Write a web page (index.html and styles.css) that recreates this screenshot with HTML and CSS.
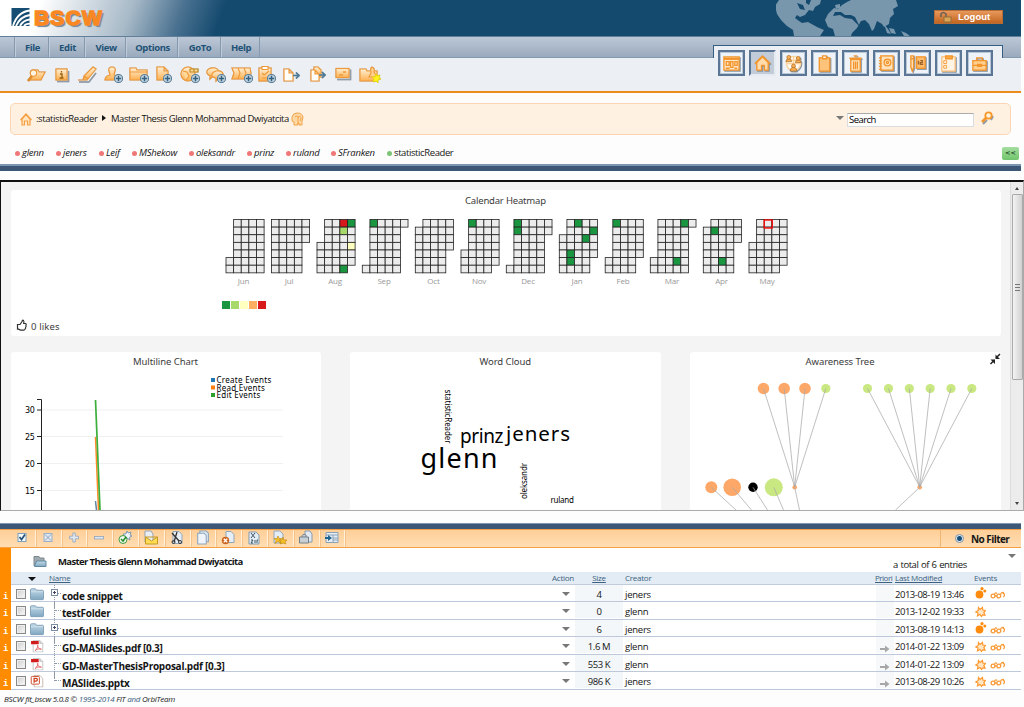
FILE: index.html
```html
<!DOCTYPE html>
<html lang="en">
<head>
<meta charset="utf-8">
<title>BSCW</title>
<link rel="stylesheet" href="styles.css">
</head>
<body>
<svg class="defs" width="0" height="0">
  <defs>
    <linearGradient id="og" x1="0" y1="0" x2="0" y2="1"><stop offset="0" stop-color="#fff0d6"/><stop offset="1" stop-color="#fdb050"/></linearGradient>
    <linearGradient id="bg" x1="0" y1="0" x2="0" y2="1"><stop offset="0" stop-color="#c4dbe9"/><stop offset="1" stop-color="#7fa6c0"/></linearGradient>
    <symbol id="plus" viewBox="0 0 8 8"><circle cx="4" cy="4" r="3.600" fill="#c5d5e0" stroke="#58809c" stroke-width=".9"/><path d="M4 1.600v4.800M1.600 4h4.800" stroke="#34607f" stroke-width="1.300"/></symbol>
    <symbol id="page" viewBox="0 0 14 14"><path d="M4.500 1h6l2 2v8h-8z" fill="#dfe9f2" stroke="#8ea5ba"/><path d="M2.500 3h6l2 2v8h-8z" fill="#eef4f9" stroke="#8ea5ba"/></symbol>
    <symbol id="folder" viewBox="0 0 14 12"><path d="M.5 1.500q0-1 1-1h4l1 1.500h6q1 0 1 1v7.500q0 1-1 1h-11q-1 0-1-1z" fill="url(#bg)" stroke="#7396ae" stroke-width=".8"/><path d="M1 3.500h12" stroke="#d7e6ef" stroke-width=".8"/></symbol>
    <symbol id="pdf" viewBox="0 0 14 13"><path d="M3 .5h7l3 3v9H3z" fill="#fff" stroke="#b9b9b9" stroke-width=".8"/><path d="M10 .5v3h3" fill="#ddd" stroke="#b9b9b9" stroke-width=".8"/><path d="M.8 1h8v3.300h-8z" fill="#d31d1d"/><path d="M5 11c2-1.500 3-4 2.700-5.500C7.200 7.500 9 9.700 11.600 9.500 9 8.800 6.500 9.600 5 11z" fill="none" stroke="#e05050" stroke-width=".8"/></symbol>
    <symbol id="ppt" viewBox="0 0 14 13"><path d="M4 .5h6l3 3v9H4z" fill="#fff" stroke="#b9a9a0" stroke-width=".8"/><rect x="1" y="1.500" width="8.500" height="8" rx="1" fill="#fff" stroke="#d04d2b"/><path d="M4 8V3.500h2a1.400 1.400 0 0 1 0 2.800H4" fill="none" stroke="#cf3f1c" stroke-width="1.300"/></symbol>
    <symbol id="burst" viewBox="0 0 11 11"><path d="M3.500 1l1.500 2 2.500-2 .3 2.500 2.700.5-1.700 2 1.200 2.500-2.500-.2L6.500 10 5 8 2.500 9.300 3 6.500.8 5.500 3.200 4z" fill="#ffe6c4" stroke="#ff982e" stroke-width="1.200"/></symbol>
    <symbol id="blob" viewBox="0 0 12 12"><circle cx="4.500" cy="7.500" r="3.900" fill="#ff8a0c"/><circle cx="7" cy="1.700" r="1.600" fill="#ff8a0c"/><circle cx="9.800" cy="4" r="1.500" fill="#ff8a0c"/></symbol>
    <symbol id="glasses" viewBox="0 0 16 8"><circle cx="3" cy="5" r="1.900"/><circle cx="8.800" cy="5" r="1.900"/><path d="M4.500 3.500Q5 1 7 2.500M4.900 5h2M10.500 3.800Q11 .8 14 1.600M12.800 1.800q3 1.500.6 4.400"/></symbol>
    <symbol id="arrow" viewBox="0 0 10 8"><path d="M0 3h5V.5L9.500 4 5 7.500V5H0z" fill="#a7a7a7"/></symbol>
  </defs>
</svg>

<header class="banner">
  <div class="logo">
    <svg width="20" height="20" viewBox="0 0 20 20"><path d="M.5 1h18v18H.5z" fill="#164d72"/><path d="M2 19C5 9 10 4.500 19 3.500M5 19c3-7 7-10 14-11M9 19c2-4 5-6 10-6.500M13 19c1-1.500 3-2.300 6-2.300" fill="none" stroke="#fff" stroke-width="1.800"/></svg>
    <span class="logo-text">BSCW</span>
  </div>
  <svg class="world" width="136" height="36" viewBox="776 0 136 36">
    <path d="M779 0h42l-1 4-5 3-2 4-4-1-4 5-5 2-3-2-2 3 4 3 3 2 6-1 9 5 7 3-4 6h-26l-1-6-6-4-6-6-4-6-2-8z"/>
    <path d="M797 3l6 2 2 5-5-1zM806 0h5l-2 5-3-2z" class="sea"/>
    <path d="M835 5l5-1v4l-4 1zM831 11l3-3 4 1 4-4 5-3 4-2h45l2 6-5 3 1 5-4 4-1 6-5 3-2-3-5-3-3 8-2 2-3-7-4-4-4 1-4 7-5 5-1 3h-16l-2-7-5-2-3-7 3-6z"/>
    <path d="M835 12l6 0 4 3 6 0 4 2 5 10-8-8-7-1-5-3-7 1z" class="sea"/>
    <path d="M884 24l4 5 3 5-4-1zM889 28l5 1 2 5-5-1zM901 31l5 2 4 3h-6z"/>
  </svg>
  <button class="logout"><svg width="14" height="13" viewBox="0 0 14 13"><path d="M2 6V3q2-3 5 0v4" fill="none" stroke="#6e6256" stroke-width="1.600"/><rect x="5" y="6" width="7" height="5" fill="#dca457" stroke="#91713b"/></svg><span>Logout</span></button>
</header>

<div class="bars">
  <nav class="menu"><span class="file">File</span><span class="edit">Edit</span><span class="view">View</span><span class="options">Options</span><span class="goto">GoTo</span><span class="help">Help</span></nav>
  <div class="toolbar">
    <svg viewBox="0 0 24 20"><path d="M9 5h5l1 2h6l-4 8H5l4-6z" fill="url(#og)"/><path d="M8 11L4 16" stroke-width="2.500" stroke="#e08c2c"/><circle cx="9.500" cy="8" r="3.200" fill="#fff4e4"/></svg>
    <svg viewBox="0 0 24 20"><path class="shadow" d="M7 16.500h11.500V6"/><rect x="6" y="4" width="11" height="11" fill="url(#og)"/><path d="M11.500 6v1.500M10 9h2v4M9.500 13h4" stroke="#96600f" stroke-width="1.300"/></svg>
    <svg viewBox="0 0 24 20"><path class="shadow" d="M4 17h10l7-9"/><path d="M18 2l3 2-9 11-4 0 1-4zM9 11l4 3M3 15h7" fill="url(#og)"/></svg>
    <svg viewBox="0 0 24 20"><path d="M11 2q4 0 3 4l-1 4q5 1 5 5H4q0-4 5-5L8 6q-1-4 3-4z" fill="url(#og)"/><use href="#plus" x="13" y="9" width="9" height="9"/></svg>
    <svg viewBox="0 0 24 20"><path d="M3 3h6l1 2h10v10H3zM3 7h17" fill="url(#og)"/><use href="#plus" x="13" y="9" width="9" height="9"/></svg>
    <svg viewBox="0 0 24 20"><path d="M5 2h7l4 4v9H5zM12 2v4h4" fill="url(#og)"/><use href="#plus" x="11" y="9" width="9" height="9"/></svg>
    <svg viewBox="0 0 24 20"><circle cx="10" cy="9" r="7" fill="url(#og)"/><path d="M5 6l4 1 2 4-3 4" fill="#ffd99a"/><path d="M12 4h4v3h-4zM16 4h4v3h-4z" fill="#ffd99a" stroke="#bd8b22"/><use href="#plus" x="13" y="9" width="9" height="9"/></svg>
    <svg viewBox="0 0 24 20"><path d="M8 11q-6-1-5-5 2-4 8-3 4 1 3 4M6 10v4l3-3" fill="url(#og)"/><path d="M12 6q6-1 7 3t-5 5l-2 2v-3q-5-1-4-4 1-2 4-3z" fill="url(#og)"/><use href="#plus" x="13" y="9" width="9" height="9"/></svg>
    <svg viewBox="0 0 24 20"><path d="M2 3h6l2 5-2 6H2l2-6zM8 3h6l2 5-2 6H8l2-6zM14 3h6l1 5-1 6h-6l2-6z" fill="url(#og)"/><use href="#plus" x="14" y="9" width="9" height="9"/></svg>
    <svg viewBox="0 0 24 20"><rect x="4" y="3" width="12" height="13" fill="url(#og)"/><path d="M7 1.500h6v3H7z" fill="#fff"/><path d="M7 8l2 2 5-4M7 13h5"/><use href="#plus" x="12" y="9" width="9" height="9"/></svg>
    <svg viewBox="0 0 24 20"><path d="M3 4h5l4 4v8H3zM8 4v4h4" fill="#fffdf8"/><path class="dark" d="M12 10.500h6M15 7.500l3 3-3 3"/></svg>
    <svg viewBox="0 0 24 20"><path d="M7 2h4l3 3v7H7z" fill="url(#og)"/><path d="M4 5h4l4 4v7H4zM8 5v4h4" fill="#fffdf8"/><path class="dark" d="M12 10h6M15 7l3 3-3 3"/></svg>
    <svg viewBox="0 0 24 20"><path class="shadow" d="M5 14.500h13.500V4.500"/><rect x="4" y="3.500" width="13" height="9" fill="url(#og)"/><path d="M7 10h4M11 7h3" stroke-width="1.500"/></svg>
    <svg viewBox="0 0 24 20"><path d="M2 4h6l1 2h10v10H2z" fill="url(#og)"/><path d="M14 2q3 1 2 5l3 5h-8q1-2 2-4-1-5 1-6z" fill="#ffd08d"/><path d="M18 9l1 2 3-1-1 3 2 1-3 1v3l-2-2-3 1 1-3-2-2h3z" fill="#fff21f" stroke="#e5d600" stroke-width=".7"/></svg>
  </div>
  <div class="places">
    <div><svg viewBox="0 0 20 20"><path d="M2 3h16v14H2z" fill="#ffe6c4"/><path d="M2 5h16" stroke-width="2.500"/><path d="M4.500 8h3v4h-3zM9 8h2.500v6H9zM13.500 8h2.500v4h-2.500zM4 15h4M13 15h3"/></svg></div>
    <div class="active"><svg viewBox="0 0 20 20"><path d="M4 17V9l6-6 6 6v8h-4v-5H9v5zM2 10l8-8 8 8" fill="#ffdcaa"/></svg></div>
    <div><svg viewBox="0 0 20 20"><circle cx="10" cy="10" r="7.500" fill="#fff9ef" stroke="#ffd49a"/><path d="M3 10h14M10 2v16M5 5q5 4 10 0" stroke="#ffd49a"/><g fill="#ffae4f" stroke="#a8722f" stroke-width=".8"><path d="M2 8q0-3 3-3t3 3zM12 9q0-3 3-3t3 3zM6.500 18q0-4 3.500-4t3.500 4z"/><circle cx="5" cy="3.500" r="2"/><circle cx="15" cy="4.500" r="2"/><circle cx="10" cy="12.500" r="2"/></g></svg></div>
    <div><svg viewBox="0 0 20 20"><rect x="4.500" y="4" width="11" height="14" fill="#fdc37a"/><path d="M8 2h4v3H8z" fill="#fff2df"/></svg></div>
    <div><svg viewBox="0 0 20 20"><path d="M5 6h10v12H5z" fill="#ffe4be"/><path d="M3.500 4.500h13M8 2h4M8 8v8M10 8v8M12 8v8"/></svg></div>
    <div><svg viewBox="0 0 20 20"><rect x="4" y="2" width="13" height="15" fill="#ffe3bc"/><path d="M2 4h3M2 7h3M2 10h3M2 13h3M2 16h3"/><circle cx="11" cy="9" r="3.500"/><circle cx="11" cy="9" r="1.200"/></svg></div>
    <div><svg viewBox="0 0 20 20"><path d="M3 2h3v12l-1.500 4L3 14zM3 5h3" fill="#ffe0b5"/><rect x="9" y="3" width="9" height="12" fill="#ffbd6b"/><path d="M11 7v4M13 7h2v2h-2v2h3" stroke="#9e642c"/></svg></div>
    <div><svg viewBox="0 0 20 20"><rect x="3" y="3" width="14" height="15" fill="#fff4e4" stroke="#fac07c"/><path d="M7 2h7v3H7z" fill="#ffad43"/><path d="M5 7h3v3H5zM5 12h3v3H5z" stroke-width=".9"/></svg></div>
    <div><svg viewBox="0 0 20 20"><rect x="3" y="7" width="14" height="10" fill="#ffd08f"/><path d="M7 7V4h6v3M3 12h14M8 11h4v2H8z"/></svg></div>
  </div>
</div>

<div class="crumbs">
  <svg class="home" width="12" height="13" viewBox="0 0 12 13"><path d="M2 12V6l4-4.500L10 6v6H7.500V8h-3v4zM.5 7L6 1l5.500 6" fill="#ffe6c2" stroke="#f5a040" stroke-width="1.200"/></svg>
  <span class="reader">:statisticReader</span><i class="tri-right"></i>
  <span class="path">Master Thesis Glenn Mohammad Dwiyatcita</span>
  <svg class="heads" width="13" height="15" viewBox="0 0 13 15"><path d="M1 5q1-4 5-4 6 0 6 5l-1 3v4H8v-2H7v2H3v-3L1 9z" fill="#ffd8a3" stroke="#f0a34a"/><path d="M4 5q1-2 3 0v7M7 5q3-2 3 2L9 9" fill="none" stroke="#f0a34a"/></svg>
  <i class="tri-down search-tri"></i>
  <input class="search" value="Search">
  <svg class="lens" width="14" height="14" viewBox="0 0 14 14"><path d="M3 13l4-4M11 9l2-4" stroke="#8e9ba8" stroke-width="2"/><path d="M6 7l-4 4" stroke="#f7972a" stroke-width="2.500"/><circle cx="8.500" cy="4.500" r="3.200" fill="#fff2dd" stroke="#f7972a" stroke-width="1.800"/></svg>
</div>

<div class="users">
  <span class="u1">glenn</span><span class="u2">jeners</span><span class="u3">Leif</span><span class="u4">MShekow</span><span class="u5">oleksandr</span><span class="u6">prinz</span><span class="u7">ruland</span><span class="u8">SFranken</span><span class="u9 online">statisticReader</span>
  <button class="collapse">&lt;&lt;</button>
</div>
<div class="rule"></div>

<section class="frame">
  <div class="widgets">
    <article class="card wide">
      <svg width="990" height="146" viewBox="11 190 990 146">
        <text class="title" x="465" y="203.500" textLength="81">Calendar Heatmap</text>
        <g id="heatmap"></g>
        <g class="legend"><path fill="#1a9641" d="M222 301h8v8h-8z"/><path fill="#a6d96a" d="M231 301h8v8h-8z"/><path fill="#ffffbf" d="M240 301h8v8h-8z"/><path fill="#fdae61" d="M249 301h8v8h-8z"/><path fill="#d7191c" d="M258 301h8v8h-8z"/></g>
        <path class="thumb" d="M17.500 324.500h2.500l2-3q.5-2 1.500-1 .8 1 .2 3h2q1 1 .2 2 .5 1-.3 2 .3 1-.6 1.600-.3 1-1.200 1h-3.500l-1.600-.9h-1.200z"/>
        <text class="title" x="31" y="329.500" textLength="28.500">0 likes</text>
      </svg>
    </article>
    <div class="row">
      <article class="card">
        <svg width="310" height="158" viewBox="11 352 310 158">
          <text class="title" x="133" y="365" textLength="65">Multiline Chart</text>
          <path d="M42 410H283M42 436.500H283M42 463.500H283M42 490.500H283" stroke="#f0f0f0"/>
          <path d="M37 399.500h4.500V510M37 410h5M37 436.500h5M37 463.500h5M37 490.500h5" fill="none" stroke="#222"/>
          <g class="axis"><text x="25" y="413">30</text><text x="25" y="439.500">25</text><text x="25" y="466.500">20</text><text x="25" y="493.500">15</text></g>
          <path d="M95.500 501l1 9" stroke="#5c86a8" stroke-width="1.500"/><path d="M95.500 437l3 73" stroke="#ff8a25" stroke-width="1.500"/><path d="M95.500 400l4.500 110" stroke="#3bae3b" stroke-width="1.700"/>
          <path d="M211 378h4v4h-4z" fill="#1f77b4"/><path d="M211 385.500h4v4h-4z" fill="#ff7f0e"/><path d="M211 393h4v4h-4z" fill="#2ca02c"/>
          <g class="key"><text x="216.500" y="383" textLength="54.500">Create Events</text><text x="216.500" y="390.700" textLength="48">Read Events</text><text x="216.500" y="398.300" textLength="43.500">Edit Events</text></g>
        </svg>
      </article>
      <article class="card mid">
        <svg width="311" height="158" viewBox="350 352 311 158">
          <text class="title" x="479.500" y="365" textLength="51.500">Word Cloud</text>
          <g class="cloud">
            <text x="420.500" y="468" font-size="27" textLength="77">glenn</text>
            <text x="460" y="442.500" font-size="19" textLength="43.500">prinz</text>
            <text x="506" y="440.500" font-size="20.500" textLength="64">jeners</text>
            <text x="550.500" y="503" font-size="8" textLength="23.500">ruland</text>
            <text transform="translate(445 389.500) rotate(90)" font-size="8" textLength="54">statisticReader</text>
            <text transform="translate(526.500 499) rotate(-90)" font-size="8" textLength="36">oleksandr</text>
          </g>
        </svg>
      </article>
      <article class="card mid">
        <svg width="311" height="158" viewBox="690 352 311 158">
          <text class="title" x="805.500" y="365" textLength="69">Awareness Tree</text>
          <g fill="#fda868"><circle cx="763.500" cy="388.500" r="5.800"/><circle cx="784.200" cy="388.500" r="5.800"/><circle cx="805" cy="388.500" r="5.800"/><circle cx="711.300" cy="487.300" r="6"/><circle cx="732.200" cy="487.300" r="8.800"/><circle cx="794.700" cy="487.300" r="2.300"/><circle cx="919.700" cy="487.300" r="2.300"/></g>
          <circle cx="753" cy="487.300" r="4.700"/>
          <g fill="#cae882"><circle cx="773.800" cy="487.300" r="9"/><circle cx="825.800" cy="388.500" r="4.600"/><circle cx="867.500" cy="388.500" r="4.600"/><circle cx="888.500" cy="388.500" r="4.600"/><circle cx="909.300" cy="388.500" r="4.600"/><circle cx="930.200" cy="388.500" r="4.600"/><circle cx="951" cy="388.500" r="4.600"/><circle cx="971.800" cy="388.500" r="4.600"/></g>
          <path d="M763.500 388.500L794.700 487 784.200 388.500M805 388.500L794.700 487 825.800 388.500M867.500 388.500L919.700 487 888.500 388.500M909.300 388.500L919.700 487 930.200 388.500M951 388.500L919.700 487 971.800 388.500M711.300 487.300L736 510M732.200 487.300L751.500 510M753 487.300L767.500 510M773.800 487.300L783.500 510M794.700 487.300L799.500 510M919.700 487.300L895.500 510" fill="none" stroke="#aaa" stroke-opacity=".75"/>
          <path d="M1000 354l-4 4M990.500 364l4-4" stroke="#222" stroke-width="1.500"/><path d="M995.500 354.500v4.500h4.500zM990.500 359.500h4.500v4.500z" fill="#222"/>
        </svg>
      </article>
    </div>
  </div>
  <div class="scroll"><i class="up"></i><div class="grip"><b></b></div><i class="down"></i></div>
</section>
<div class="rule second"></div>

<div class="actions">
  <span><svg viewBox="0 0 16 16"><rect x="4" y="3.500" width="8" height="8" fill="#f3f8fc" stroke="#7ca0bf"/><path d="M5.500 7l2 2.500L11 4.500" fill="none" stroke="#245276" stroke-width="1.700"/></svg></span>
  <span><svg viewBox="0 0 16 16"><rect x="4" y="3.500" width="8" height="8" fill="#dfe7f0" stroke="#9bb0c8"/><path d="M5 4.500l6 6M11 4.500l-6 6" stroke="#91a6c0"/></svg></span>
  <span><svg viewBox="0 0 16 16"><path d="M6.800 3h2.500v3.200h3.200v2.600H9.300V12H6.800V8.800H3.500V6.200h3.300z" fill="#e2e8f1" stroke="#8fa4bc" stroke-width=".8"/></svg></span>
  <span><svg viewBox="0 0 16 16"><rect x="3.500" y="6.500" width="9" height="2.500" fill="#dfe6ef" stroke="#8fa4bc" stroke-width=".8"/></svg></span>
  <span><svg viewBox="0 0 16 16"><path d="M10 1l1.200 2L14 2l-1 3 2 1-2.500 1.300L13 10l-3-2-3 1 1-3-2-2 3-.2z" fill="#eff5fb" stroke="#7d9ab6"/><circle cx="6" cy="9.500" r="4" fill="#eff9ee" stroke="#3c9c3f"/><path d="M4 9l2 2 3-4" fill="none" stroke="#248c29" stroke-width="1.500"/></svg></span>
  <span><svg viewBox="0 0 16 16"><path d="M2 1h6l2 3v8H2z" fill="#e9eef3" stroke="#94a5b5"/><path d="M2.500 7h12v7h-12zM2.500 7l6 4 6-4" fill="#ffdc55" stroke="#c69a20"/></svg></span>
  <span><svg viewBox="0 0 16 16"><path d="M4 1.500h6l3 3v9H4z" fill="#e7eef5" stroke="#8ea5ba"/><path d="M3 3l7 8M8 2L5 12" stroke="#333" stroke-width="1.300"/><circle cx="4.500" cy="12" r="1.500" fill="none" stroke="#333"/><circle cx="11" cy="12" r="1.500" fill="none" stroke="#333"/></svg></span>
  <span><svg viewBox="0 0 16 16"><use href="#page" width="15" height="15"/></svg></span>
  <span><svg viewBox="0 0 16 16"><path d="M6 1.500h5l3 3v8H6z" fill="#e7eef5" stroke="#8ea5ba"/><circle cx="5.500" cy="10.500" r="3.700" fill="#ce641c"/><path d="M3.800 8.800l3.400 3.400M7.200 8.800l-3.400 3.400" stroke="#fff" stroke-width="1.300"/></svg></span>
  <span><svg viewBox="0 0 16 16"><path d="M3 2h7l3 3v9H3z" fill="#e5edf4" stroke="#819ab1"/><path d="M5 3l4 5M9 3L5 8M5 10h2l-2 3h2M9 10v3M11 13v-3h1" stroke="#395568" fill="none"/></svg></span>
  <span><svg viewBox="0 0 16 16"><path d="M2 1h6l3 3v9H2z" fill="#e5edf4" stroke="#94a8ba"/><path d="M6 6l1 2.500h3L8 10.500l1 3-3-2-3 2 1-3-2-2h3zM11 7l1 3h3l-2 2 1 2-3-1-3 1 1-2-2-2h3z" fill="#f7bf24" stroke="#c49120" stroke-width=".7"/></svg></span>
  <span><svg viewBox="0 0 16 16"><path d="M7 1h5l2 3v8H7z" fill="#e3eaf2" stroke="#849bb0"/><path d="M1.500 7h9v6h-9zM4 7q0-4 4-2v2" fill="#c8d0d6" stroke="#73818a"/></svg></span>
  <span><svg viewBox="0 0 16 16"><path d="M2 2.500h12v10H2zM2 5h12M9 5v7M9 8h5M9 10h5" fill="#e7eef5" stroke="#8aa2b8"/><path d="M1 7h3V5l4 3-4 3V9H1z" fill="#1f638e"/></svg></span>
  <div class="filter"><i class="radio"></i><b>No Filter</b></div>
</div>

<main class="listing">
  <div class="caption">
    <svg width="14" height="13" viewBox="0 0 14 13"><path d="M1 11V1.500h5l1 1.500h4v3" fill="#9fa9b0" stroke="#7c8890"/><path d="M3.500 6h9.500v5.500H1.500z" fill="url(#bg)" stroke="#6289a3"/></svg>
    <b>Master Thesis Glenn Mohammad Dwiyatcita</b>
    <span class="total">a total of 6 entries</span><i class="tri-down"></i>
  </div>
  <div class="grid head"><span class="strip"></span><span></span><span><i class="tri-down sort"></i></span><span class="hname"><u>Name</u></span><span></span><span class="haction">Action</span><span class="hsize"><u>Size</u></span><span class="hcreator">Creator</span><span class="prio"><u>Priori</u></span><span class="hdate"><u>Last Modified</u></span><span>Events</span></div>
  <div id="rows"></div>
</main>
<footer>BSCW fit_bscw 5.0.8 © <span>1995-2014</span> FIT <span>and</span> OrbiTeam</footer>
<script src="app.js"></script>
</body>
</html>
```
FILE: app.js
```js
// Each month: label, label centre, left edge, columns as [first,last] weekday rows, coloured days
const G = '#1a9641', F = [0, 6];
const months = [
  ['Jun', 243.5, 226, [[5, 6], F, F, F, F], {}],
  ['Jul', 289, 271.5, [F, F, F, F, [0, 2]], {}],
  ['Aug', 335, 317, [[3, 6], F, F, F, [0, 5]], { '3,0': '#d7191c', '4,0': G, '3,1': '#a6d96a', '4,3': '#ffffbf', '3,6': G }],
  ['Sep', 384, 362.3, [[6, 6], F, F, F, F, [0, 0]], { '1,0': G }],
  ['Oct', 433.5, 415.3, [[1, 6], F, F, F, [0, 3]], {}],
  ['Nov', 479, 461, [[4, 6], F, F, F, [0, 5]], { '1,0': G }],
  ['Dec', 528, 506.3, [[6, 6], F, F, F, F, [0, 1]], { '1,0': G, '1,1': G }],
  ['Jan', 577, 559.3, [[2, 6], F, F, F, [0, 4]], { '2,0': G, '4,1': G, '3,2': G, '1,4': G, '1,5': G }],
  ['Feb', 623, 605.2, [[5, 6], F, F, F, [0, 4]], { '1,0': G }],
  ['Mar', 672, 650.3, [[5, 6], F, F, F, F, [0, 0]], { '4,0': G, '3,5': G }],
  ['Apr', 721.5, 703.3, [[1, 6], F, F, F, [0, 2]], { '1,1': G, '2,5': G }],
  ['May', 767, 749, [[3, 6], F, F, F, [0, 5]], {}]
];
const S = 7.62;
let out = '';
for (const [name, cx, x0, cols, hot] of months) {
  cols.forEach(([a, b], c) => {
    for (let r = a; r <= b; r++) {
      out += `<rect x="${x0 + c * S}" y="${219.5 + r * S}" width="${S}" height="${S}" fill="${hot[c + ',' + r] || '#ececec'}"/>`;
    }
  });
  out += `<text x="${cx}" y="283.7">${name}</text>`;
}
out += `<rect class="today" x="${749 + 2 * S}" y="220" width="8" height="8"/>`;
document.getElementById('heatmap').innerHTML = out;

const files = [
  ['folder', 'code snippet', '4', 'jeners', '2013-08-19 13:46', true, ['blob', 'glasses']],
  ['folder', 'testFolder', '0', 'glenn', '2013-12-02 19:33', false, ['burst']],
  ['folder', 'useful links', '6', 'jeners', '2013-08-19 14:13', true, ['blob', 'glasses']],
  ['pdf', 'GD-MASlides.pdf [0.3]', '1.6 M', 'glenn', '2014-01-22 13:09', false, ['burst', 'glasses']],
  ['pdf', 'GD-MasterThesisProposal.pdf [0.3]', '553 K', 'glenn', '2014-01-22 13:09', false, ['burst', 'glasses']],
  ['ppt', 'MASlides.pptx', '986 K', 'jeners', '2013-08-29 10:26', false, ['burst', 'glasses']]
];
document.getElementById('rows').innerHTML = files.map(([icon, name, size, who, date, open, ev]) => `
  <div class="grid item"><span class="strip">i</span><span><i class="check"></i></span>
  <span><svg class="ficon" width="14" height="13"><use href="#${icon}" width="14" height="12.500"/></svg></span>
  <span class="tree">${open ? '<i class="expand"></i>' : ''}</span><b class="name">${name}</b>
  <span class="act"><i class="tri-down"></i></span><span class="size">${size}</span><span>${who}</span>
  <span class="prio">${icon === 'folder' ? '' : '<svg width="10" height="8"><use href="#arrow"/></svg>'}</span>
  <span class="date">${date}</span>
  <span class="events">${ev.map(e => `<svg class="${e}"><use href="#${e}"/></svg>`).join('')}</span></div>`).join('');
```
FILE: styles.css
```css
* { box-sizing: border-box; }
body { margin: 0; width: 1024px; height: 707px; overflow: hidden; background: #fdfdfd; color: #151515; font: 9.5px/12px "Open Sans", "Noto Sans", sans-serif; letter-spacing: -.25px; }
svg { display: block; flex: none; }
.defs { position: absolute; }
.banner { display: flex; width: 1021px; height: 36px; background: linear-gradient(110deg, #fff 0, #fff 4%, #a8bac8 13%, #4a7190 18%, #144a6e 22%, #144a6e 100%); }
.logo { display: flex; width: 776px; padding: 7px 0 0 11px; gap: 3px; }
.logo-text { color: #f98722; font: 900 21px/22px "Liberation Sans", sans-serif; letter-spacing: 1.2px; -webkit-text-stroke: 1.500px #f98722; text-shadow: 2px 2px 1px #6e8698; }
.world { fill: #7896ac; }
.world .sea { fill: #144a6e; }
.logout { display: flex; align-items: center; gap: 5px; width: 69px; height: 14px; margin: 10px 0 0 22px; padding: 0 0 0 4px; border: 1px solid #b76c35; background: linear-gradient(#e8995c, #c26520); color: #fff; font: bold 9.500px/12px "Liberation Sans", sans-serif; }
.bars { position: relative; width: 1021px; height: 57px; }
.menu { display: flex; height: 22px; padding-left: 14px; border-top: 1px solid #607f99; border-bottom: 1px solid #8399ae; background: linear-gradient(#bcc8d7, #9aaabc); font-weight: 700; font-size: 9.500px; line-height: 22px; color: #1f5276; letter-spacing: -.4px; text-align: center; }
.menu span { border-left: 1px solid #8498ae; box-shadow: inset 1px 0 #c2ccd8; padding-left: 2px; }
.file { width: 34px; } .edit { width: 36px; } .view { width: 41px; } .options { width: 52px; } .goto { width: 43px; } .help { width: 40px; border-right: 1px solid #8498ae; }
.toolbar { display: flex; height: 35px; padding: 7px 0 0 24px; gap: 1.700px; background: #eceff4; border-bottom: 2px solid #ec8c1c; }
.toolbar svg { width: 24px; height: 20px; fill: none; stroke: #ef9a3a; stroke-width: 1.150; filter: drop-shadow(.7px .7px 0 #b9b3ab); }
.toolbar .shadow { stroke: #8e9cab; stroke-width: 1.500; }
.toolbar .dark { stroke: #4c7b99; stroke-width: 1.700; }
.places { position: absolute; left: 713px; top: 9px; display: flex; gap: 4px; width: 290px; height: 32px; padding: 4px 0 0 5px; border-top: 1px solid #345f82; background: linear-gradient(#345f82, #345f82) 0 0/1px 12px no-repeat, linear-gradient(#345f82, #345f82) 100% 0/1px 12px no-repeat, #eceff4; }
.places div { flex: none; width: 27px; height: 26px; padding: 2px; border: 2px solid #5b7695; box-shadow: inset 0 0 0 1px #b8c7d8; background: #eef3f9; }
.places .active { background: #c2cbd8; box-shadow: none; border-right-color: #e6ebf1; border-bottom-color: #e6ebf1; }
.places svg { width: 19px; height: 19px; fill: none; stroke: #f2952d; stroke-width: 1.400; filter: drop-shadow(1px 1px 0 #8b98a6); }
.crumbs { display: flex; align-items: center; width: 1001px; height: 32px; margin: 10px 0 0 10px; padding-left: 9px; border: 1px solid #fbd5b1; border-radius: 5px; background: #fef1e2; }
.reader { width: 61px; margin-left: 4px; white-space: nowrap; letter-spacing: -.4px; }
.tri-right { margin: 0 0 3px 5px; border: 3px solid transparent; border-left: 4px solid #111; border-right: 0; }
.path { width: 177px; margin-left: 5px; white-space: nowrap; letter-spacing: -.43px; }
.heads { margin-left: 3px; }
.tri-down { width: 0; height: 0; border: 4px solid transparent; border-top-color: #777; border-bottom: 0; }
.search-tri { margin: 0 0 3px auto; }
.search { width: 127px; height: 14px; margin: 1px 6px 0 3px; padding: 0 1px; border: 1px solid #d9dde2; border-top-color: #aaa; background: #fff; font: 9.500px/12px "Open Sans", sans-serif; letter-spacing: -.55px; }
.lens { margin: 0 16px 2px 0; }
.users { display: flex; height: 29px; padding: 12px 0 0 15px; font-style: italic; }
.users span { white-space: nowrap; }
.users span::before { content: ""; display: inline-block; width: 5px; height: 5px; margin-right: 2px; border-radius: 50%; background: #ef7777; }
.u1 { width: 41px; } .u2 { width: 43px; } .u3 { width: 33px; } .u4 { width: 57px; } .u5 { width: 58px; } .u6 { width: 39px; } .u7 { width: 45px; } .u8 { width: 56px; }
.users .online { font-style: normal; width: 615px; letter-spacing: -.4px; }
.users .online::before { background: #7cc576; }
.collapse { flex: none; width: 17px; height: 13px; padding: 0; border: 0; border-radius: 2px; background: linear-gradient(#a5dda0, #71c56d); color: #244d24; font: bold 6.500px/13px "DejaVu Sans", sans-serif; letter-spacing: 0; }
.rule { width: 1021px; height: 7px; border-top: 2px solid #7d97b1; background: #3c5876; }
.frame { display: flex; height: 331px; margin-top: 9px; border: 1px solid #111; border-top-width: 2px; border-right-color: #aaa; border-bottom-color: #aaa; background: #f4f4f4; overflow: hidden; }
.widgets { width: 1009px; padding: 8px 0 0 10px; }
.card { height: 160px; overflow: hidden; border-radius: 3px; background: #fff; }
.wide { width: 990px; height: 146px; }
.row { display: flex; gap: 29px; width: 990px; margin-top: 16px; }
.row .card { flex: none; width: 310px; }
.row .mid { width: 311px; }
.title { font: 9.500px "Noto Sans", sans-serif; fill: #3b3b3b; letter-spacing: 0; }
#heatmap rect { stroke: #222; stroke-width: .8; }
#heatmap .today { fill: none; stroke: red; stroke-width: 1.300; }
#heatmap text { text-anchor: middle; fill: #999; font: 8px "Open Sans", sans-serif; letter-spacing: -.2px; }
.thumb { fill: none; stroke: #333; stroke-width: 1.200; }
.axis text { font: 8px "DejaVu Sans", sans-serif; letter-spacing: -.3px; }
.key text { font: 8px "Noto Sans", sans-serif; }
.cloud text { font-family: "Noto Sans", sans-serif; letter-spacing: 0; fill: #000; }
.scroll { display: flex; flex-direction: column; align-items: center; width: 13px; background: #ececec; border-left: 1px solid #ddd; }
.up { margin: 5px 0 4px; border: 2.500px solid transparent; border-top: 0; border-bottom: 3px solid #444; }
.grip { display: flex; align-items: center; justify-content: center; width: 11px; height: 186px; border: 1px solid #aaa; border-radius: 1px; background: linear-gradient(90deg, #f3f3f3, #d1d1d1); }
.grip b { width: 5px; height: 7px; background: repeating-linear-gradient(#777 0 1px, transparent 1px 3px); }
.down { margin-top: auto; margin-bottom: 5px; border: 2.500px solid transparent; border-bottom: 0; border-top: 3px solid #444; }
.second { height: 6px; margin-top: 12px; border-top-width: 1px; }
.actions { display: flex; width: 1021px; height: 19px; padding-left: 10px; border-top: 1px solid #f7a043; border-bottom: 1px solid #f7a043; background: linear-gradient(#ffcf98, #ffddb3); }
.actions span { width: 25.800px; padding: 0 0 0 4px; border-right: 1px solid #fff0da; box-shadow: 1px 0 #f5c28a; }
.actions svg { width: 16px; height: 16px; }
.filter { display: flex; align-items: center; gap: 7px; width: 81px; margin-left: auto; padding-left: 14px; border-left: 1px solid #f1b675; font-size: 10px; letter-spacing: -.55px; }
.radio { width: 9px; height: 9px; border-radius: 50%; border: 1px solid #8096ac; background: radial-gradient(#174f78 0 2px, #dce8f2 3px); }
.listing { width: 1021px; }
.caption { display: flex; align-items: center; height: 24px; padding: 3px 5px 0 22px; border-left: 11px solid #ff8c00; background: #fff; }
.caption b { width: 186px; margin-left: 11px; white-space: nowrap; letter-spacing: -.63px; }
.total { width: 75px; margin: 6px 40px 0 auto; white-space: nowrap; letter-spacing: -.45px; word-spacing: .6px; }
.caption .tri-down { margin-bottom: 12px; }
.grid { display: grid; grid-template-columns: 11px 17px 20px 14px 492px 21px 48px 253px 18px 80px 47px; }
.head { height: 13px; background: #e3ecf4; border-bottom: 1px solid #c0cbdc; color: #3d6180; font-size: 8px; letter-spacing: -.25px; }
.strip { background: #ff8c00; color: #fff; font: bold 9px/10px "Liberation Mono", monospace; padding: 9px 0 0 3px; }
.head .strip { height: 13px; padding: 0; }
.sort { display: block; border-top-color: #111; margin: 5px 0 0 0; }
.hname { padding-left: 1px; } .haction { margin-left: -2px; } .hsize { text-align: center; } .hcreator { padding-left: 2px; }
.head .prio { background: none; letter-spacing: -.5px; margin-left: -1px; white-space: nowrap; }
.hdate { padding-left: 1px; }
.item { height: 17.450px; background: #fff; border-bottom: 1px solid #bdc8da; line-height: 20px; }
.item > span { white-space: nowrap; }
.item .strip { height: 17.450px; line-height: 10px; padding: 7px 0 0 3px; }
.check { display: block; width: 10px; height: 10px; margin: 4px 0 0 5px; border: 1px solid #888; background: linear-gradient(135deg, #ccc, #fafafa); box-shadow: inset 0 0 0 1px #eee; }
.ficon { margin: 3px 0 0 2px; }
.tree { position: relative; margin: 0 0 -1px 6px; border-left: 1px dotted #8e9aa8; }
.item:last-child .tree { height: 9px; }
.tree::after { content: ""; position: absolute; left: 0; top: 8px; width: 6px; border-top: 1px dotted #8e9aa8; }
.expand { position: absolute; z-index: 1; left: -4px; top: 4px; width: 7px; height: 7px; border: 1px solid #7b8da0; background: linear-gradient(#446, #446) 50% 50%/3px 1px no-repeat, linear-gradient(#446, #446) 50% 50%/1px 3px no-repeat, #fff; }
.name { line-height: 22px; font-size: 10px; letter-spacing: -.25px; white-space: nowrap; }
.act .tri-down { display: block; margin: 7px 0 0 8px; }
.size { text-align: center; background: #f4f7fa; height: 16px; letter-spacing: -.4px; }
.item > span:nth-child(8) { padding-left: 2px; }
.prio { background: #f7f8fa; }
.item .prio { height: 16px; padding: 8px 0 0 4px; }
.date { padding-left: 1px; letter-spacing: -.48px; }
.events { display: flex; gap: 3px; padding: 2px 0 0 1px; }
.events .blob, .events .burst { width: 12px; height: 12px; }
.events .burst { width: 11px; margin: 2px 1px 0 0; }
.events .glasses { width: 16px; height: 8px; margin-top: 4px; fill: none; stroke: #f89a36; stroke-width: 1.300; }
footer { padding: 3px 0 0 4px; font-size: 8px; font-style: italic; letter-spacing: -.25px; color: #222; }
footer span { color: #3b607e; }
```
